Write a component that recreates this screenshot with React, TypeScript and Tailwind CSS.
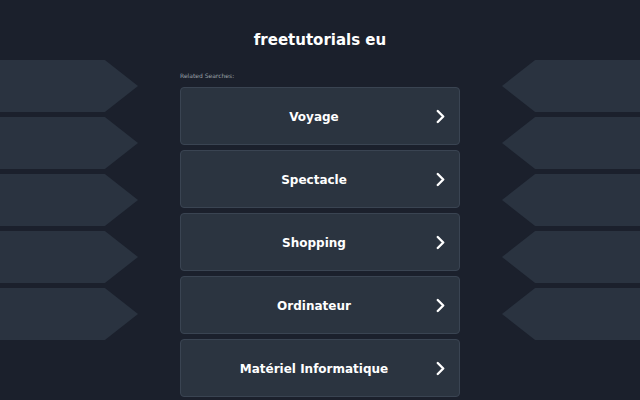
import React from 'react';

const searches = ['Voyage', 'Spectacle', 'Shopping', 'Ordinateur', 'Matériel Informatique'];

const Chevron = () => (
  <svg viewBox="0 0 12 16" className="h-[15px] w-[11px]" fill="none">
    <path d="M3 2 L9 8 L3 14" stroke="white" strokeWidth="2.6" strokeLinecap="round" strokeLinejoin="round" />
  </svg>
);

const SideArrows: React.FC<{ side: 'left' | 'right' }> = ({ side }) => (
  <div className="flex flex-col gap-[5px] pt-[60px]">
    {[0, 1, 2, 3, 4].map((i) => (
      <div
        key={i}
        className={
          side === 'left'
            ? 'h-[52px] w-[138px] bg-[#2a3340] [clip-path:polygon(0_0,76%_0,100%_50%,76%_100%,0_100%)]'
            : 'h-[52px] w-[138px] bg-[#2a3340] [clip-path:polygon(24%_0,100%_0,100%_100%,24%_100%,0_50%)]'
        }
      />
    ))}
  </div>
);

export default function App() {
  return (
    <div className="h-[400px] w-[640px] overflow-hidden bg-[#1b202c] font-['DejaVu_Sans',sans-serif] text-white">
      <div className="flex h-full justify-between">
        <SideArrows side="left" />
        <div className="flex w-[280px] flex-col">
          <h1 className="pt-[31px] text-center text-[15px] font-bold leading-[18px]">freetutorials eu</h1>
          <p className="mt-[23px] text-[6px] leading-[8px] text-[#9aa0a8]">Related Searches:</p>
          <div className="mt-[7px] flex flex-col gap-[5px]">
            {searches.map((s) => (
              <div
                key={s}
                className="flex h-[58px] items-center gap-[1px] rounded-[4px] border border-[#3a4452] bg-[#2b3440] px-[13px] pt-[1px]"
              >
                <span className="flex-1 text-center text-[12px] font-bold">{s}</span>
                <Chevron />
              </div>
            ))}
          </div>
        </div>
        <SideArrows side="right" />
      </div>
    </div>
  );
}
